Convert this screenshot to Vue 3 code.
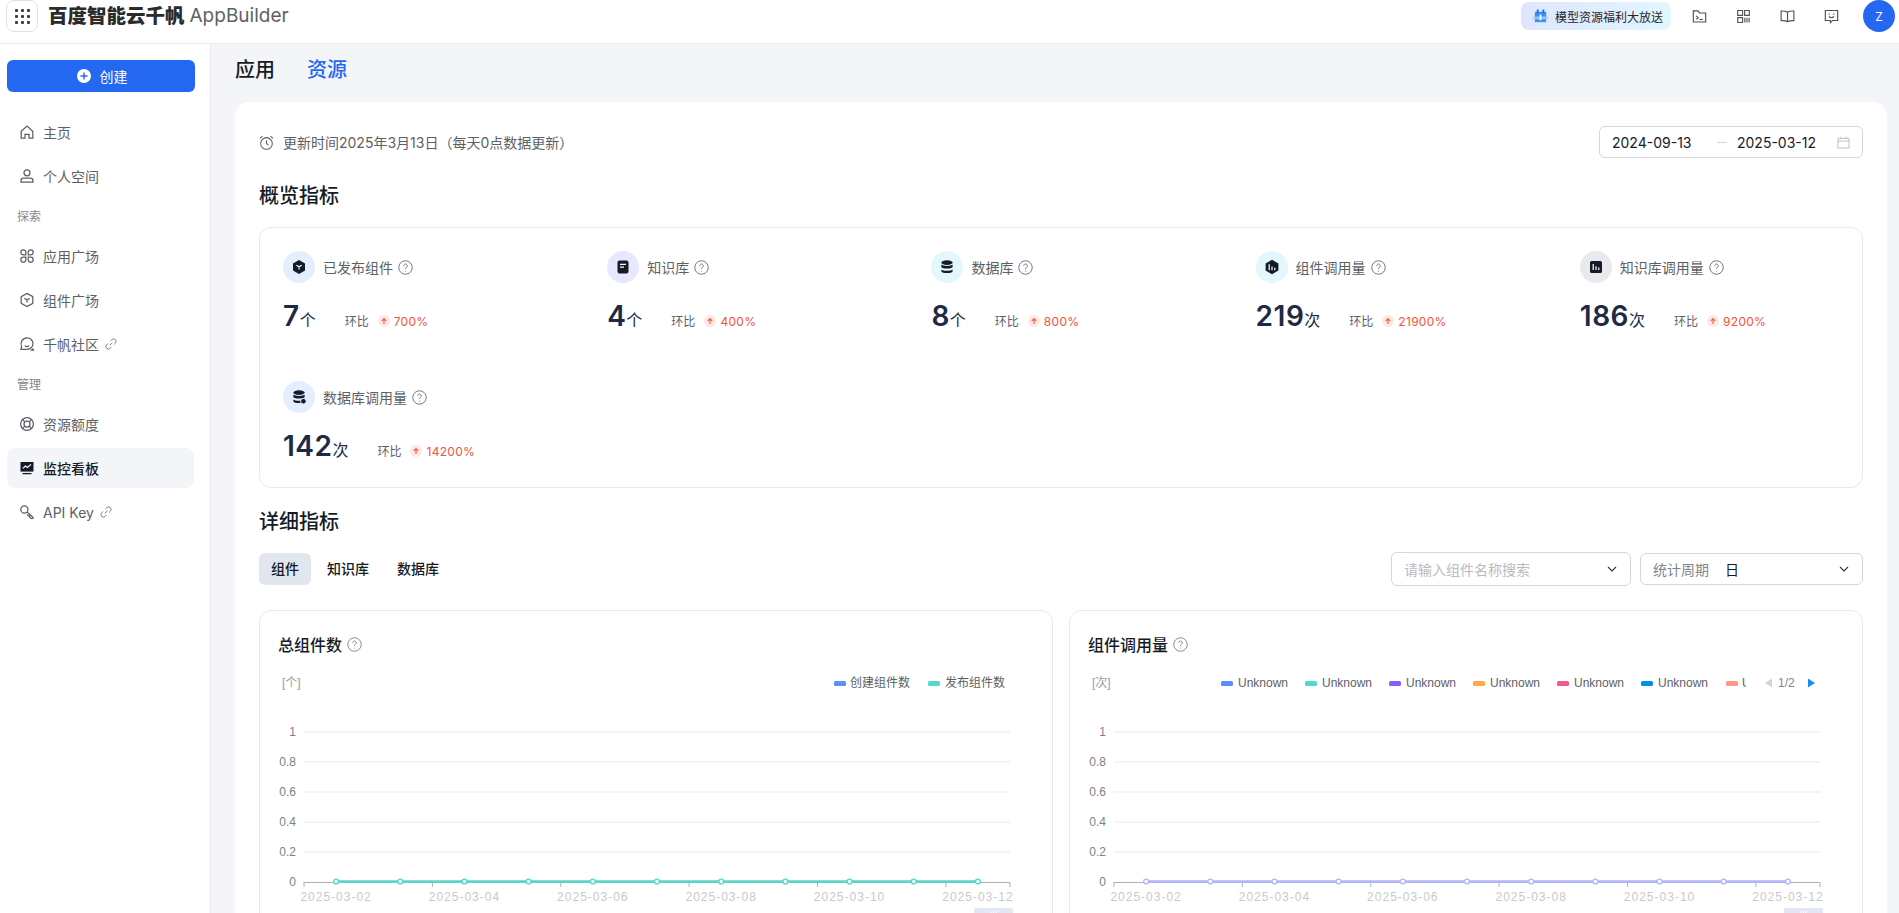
<script setup>
const linkIcon = ["M6.6 9.4 9.4 6.6", "M7.4 4.6 9 3a2.8 2.8 0 0 1 4 4l-1.6 1.6", "M8.6 11.4 7 13a2.8 2.8 0 0 1-4-4l1.6-1.6"];

// 侧边栏
const nav = [
  { label: "主页", icon: ["M2.2 7.2 8 2l5.8 5.2V14H10v-3.6H6V14H2.2z"] },
  { label: "个人空间", icon: ["M8 1.8a3 3 0 1 0 0 6 3 3 0 0 0 0-6z", "M2 14.2v-1.4c0-1.5 1.3-2.6 2.8-2.6h6.4c1.5 0 2.8 1.1 2.8 2.6v1.4z"] },
  { section: "探索" },
  { label: "应用广场", icon: ["M4.3 1.8a2.5 2.5 0 0 0 0 5h2.5V4.3a2.5 2.5 0 0 0-2.5-2.5z", "M11.7 1.8a2.5 2.5 0 0 1 0 5H9.2V4.3a2.5 2.5 0 0 1 2.5-2.5z", "M4.3 14.2a2.5 2.5 0 0 1 0-5h2.5v2.5a2.5 2.5 0 0 1-2.5 2.5z", "M11.7 14.2a2.5 2.5 0 0 0 0-5H9.2v2.5a2.5 2.5 0 0 0 2.5 2.5z"] },
  { label: "组件广场", icon: ["M8 1.4l5.8 3.2v6.8L8 14.6l-5.8-3.2V4.6z", "M5.4 6.4 8 8l2.6-1.6M8 8v2.6"] },
  { label: "千帆社区", link: true, icon: ["M8 1.8a6 6 0 0 0-5.4 8.6L2 13.4h6a5.8 5.8 0 0 0 6-5.8 5.9 5.9 0 0 0-6-5.8z", "M5.4 7.2h.01M10.4 7.2h.01", "M5.8 9.8c1.2.9 3.2.9 4.4 0", "M13.4 12.4l1 1.8h-3"] },
  { section: "管理" },
  { label: "资源额度", icon: ["M8 1.6a6.4 6.4 0 1 0 0 12.8A6.4 6.4 0 0 0 8 1.6z", "M8 5a3 3 0 1 0 0 6 3 3 0 0 0 0-6z", "M3.5 3.5 5.9 5.9M12.5 3.5 10.1 5.9M3.5 12.5l2.4-2.4M12.5 12.5l-2.4-2.4"] },
  { label: "监控看板", active: true },
  { label: "API Key", link: true, icon: ["M5.4 1.8a3.6 3.6 0 1 0 0 7.2 3.6 3.6 0 0 0 0-7.2z", "M8 8l6 5.2v1.2h-2.2L10.6 13v-1.2H9.4L8.2 10.4", "M4.6 4.4h.01"] },
];

const headerIcons = [
  ["M1.4 2h5l1.6 2.2h6.6v9.6H1.4z", "M4.4 7.4 6.6 9.2 4.4 11", "M8 11.2h3.4"],
  ["M1.8 1.6h5.2v5.2H1.8zM9.2 1.6h5v5.2h-5zM1.8 9.2h5.2v5.2H1.8z", "M9.4 9.2v5.2M11.7 9.2v5.2M14 9.2v5.2"],
  ["M8 3.4C6.6 2.4 4.4 2 1.2 2.2v10.2c3.2-.2 5.4.2 6.8 1.2 1.4-1 3.6-1.4 6.8-1.2V2.2C11.6 2 9.4 2.4 8 3.4z", "M8 3.4v10.2"],
  ["M1.4 1.6h13.2v10.6H9.2L6.8 14.6v-2.4H1.4z", "M5.6 4.8v1.2M10.4 4.8v1.2", "M5.2 8c1.5 1.2 4.1 1.2 5.6 0"],
];

// 概览指标
const stats = [
  { label: "已发布组件", value: "7", unit: "个", rate: "700%", tint: "#e3effe", kind: "box" },
  { label: "知识库", value: "4", unit: "个", rate: "400%", tint: "#e7e8fd", kind: "doc" },
  { label: "数据库", value: "8", unit: "个", rate: "800%", tint: "#e2f7fe", kind: "db" },
  { label: "组件调用量", value: "219", unit: "次", rate: "21900%", tint: "#e2f7fe", kind: "hexbar" },
  { label: "知识库调用量", value: "186", unit: "次", rate: "9200%", tint: "#e8eaee", kind: "bar" },
  { label: "数据库调用量", value: "142", unit: "次", rate: "14200%", tint: "#e3effe", kind: "dbcall" },
];

const tabs = ["组件", "知识库", "数据库"];

// 图表坐标
const axisLeft = 26;
const axisRight = 732;
const band = (axisRight - axisLeft) / 11;
const gridY = [
  { text: "1", y: 66 },
  { text: "0.8", y: 96 },
  { text: "0.6", y: 126 },
  { text: "0.4", y: 156 },
  { text: "0.2", y: 186 },
  { text: "0", y: 216 },
];
const points = Array.from({ length: 11 }, (_, i) => axisLeft + band * (i + 0.5));
const ticks = [0, 2, 4, 6, 8, 10, 11].map((i) => axisLeft + band * i);
const xLabels = [2, 4, 6, 8, 10, 12].map((d, i) => ({
  text: "2025-03-" + String(d).padStart(2, "0"),
  x: points[i * 2],
}));

const unknownColors = ["#5b8ff9", "#53d9cb", "#8e5cf8", "#ffa940", "#f25a8c", "#0090f0"];

const charts = [
  { title: "总组件数", unit: "[个]", line: "#53d9cb", kind: "left" },
  { title: "组件调用量", unit: "[次]", line: "#b3b5ff", kind: "right" },
];
</script>

<template>
  <div class="app">
    <header class="topbar">
      <div class="grid-btn">
        <span v-for="n in 9" :key="n" class="dot"></span>
      </div>
      <span class="brand">百度智能云千帆</span>
      <span class="product">AppBuilder</span>
      <div class="top-right">
        <div class="promo">
          <svg class="promo-icon" viewBox="0 0 18 18">
            <path d="M3 4h12v11H3z" fill="#3f8cf5" />
            <path d="M1 9h16v3H1z" fill="#9fd4fb" opacity="0.8" />
            <path d="M5 1.5h2v4H5zM11 1.5h2v4h-2z" fill="#1f6fe8" />
            <path d="M8 7h2v6H8z" fill="#fff" />
          </svg>
          <span>模型资源福利大放送</span>
        </div>
        <svg v-for="(icon, i) in headerIcons" :key="i" class="head-icon" viewBox="0 0 16 16">
          <path v-for="d in icon" :key="d" :d="d" />
        </svg>
        <div class="avatar">Z</div>
      </div>
    </header>

    <div class="body">
      <aside class="sidebar">
        <button class="create">
          <svg class="plus" viewBox="0 0 14 14">
            <circle cx="7" cy="7" r="7" fill="#fff" />
            <path d="M7 3.5v7M3.5 7h7" stroke="#2468f2" stroke-width="1.4" />
          </svg>
          创建
        </button>
        <nav class="nav">
          <template v-for="item in nav" :key="item.label || item.section">
            <div v-if="item.section" class="nav-section">{{ item.section }}</div>
            <div v-else class="nav-item" :class="{ active: item.active }">
              <svg v-if="item.active" class="nav-icon" viewBox="0 0 16 16">
                <path d="M1.5 2h13v9.6h-13z" fill="#151b26" />
                <path d="M3.8 8.4 6.4 6l2 1.4 3.6-3" fill="none" stroke="#fff" stroke-width="1.2" />
                <path d="M3.5 13.6h9" stroke="#151b26" stroke-width="1.3" />
              </svg>
              <svg v-else class="nav-icon line" viewBox="0 0 16 16">
                <path v-for="d in item.icon" :key="d" :d="d" />
              </svg>
              <span>{{ item.label }}</span>
              <svg v-if="item.link" class="link-icon" viewBox="0 0 16 16">
                <path v-for="d in linkIcon" :key="d" :d="d" />
              </svg>
            </div>
          </template>
        </nav>
      </aside>

      <main class="main">
        <div class="main-tabs">
          <span>应用</span>
          <span class="current">资源</span>
        </div>
        <section class="card">
          <div class="update-row">
            <div class="update">
              <svg class="clock" viewBox="0 0 16 16">
                <circle cx="8" cy="9" r="6.2" />
                <path d="M8 5.6v3.6l2.2 1.4M1 3.6l2.8-2.4M15 3.6l-2.8-2.4" />
              </svg>
              更新时间2025年3月13日（每天0点数据更新）
            </div>
            <div class="date-picker">
              <span class="date">2024-09-13</span>
              <span class="dash"></span>
              <span class="date">2025-03-12</span>
              <svg class="calendar" viewBox="0 0 14 14">
                <path d="M1 2.5h12V13H1zM1 5.5h12M4 .8v2.6M10 .8v2.6" />
              </svg>
            </div>
          </div>

          <h2 class="title overview-title">概览指标</h2>
          <div class="overview">
            <div v-for="s in stats" :key="s.label" class="stat">
              <div class="stat-head">
                <span class="stat-icon" :style="{ background: s.tint }">
                  <svg viewBox="0 0 16 16" class="stat-svg">
                    <template v-if="s.kind === 'box'">
                      <path d="M8 1 14 4.4v7.2L8 15l-6-3.4V4.4z" fill="#151b26" />
                      <path d="M5.4 6.2 8 7.8l2.6-1.6M8 7.8v2.6" stroke="#fff" fill="none" stroke-width="1.1" />
                    </template>
                    <template v-else-if="s.kind === 'doc'">
                      <rect x="2.5" y="1.5" width="11" height="13" rx="2" fill="#151b26" />
                      <path d="M5 5.4h6M5 8.2h4" stroke="#fff" stroke-width="1.2" />
                    </template>
                    <template v-else-if="s.kind === 'db' || s.kind === 'dbcall'">
                      <ellipse cx="8" cy="3.6" rx="5.6" ry="2.4" fill="#151b26" />
                      <path d="M2.4 5.6C3.6 7.4 12.4 7.4 13.6 5.6v2.6C12.4 10 3.6 10 2.4 8.2z" fill="#151b26" />
                      <path d="M2.4 10.4c1.2 1.8 10 1.8 11.2 0v2c-1 2.2-10.2 2.2-11.2 0z" fill="#151b26" />
                      <circle v-if="s.kind === 'dbcall'" cx="12.4" cy="12.2" r="2.8" fill="#151b26" stroke="#e3effe" />
                    </template>
                    <template v-else-if="s.kind === 'hexbar'">
                      <path d="M8 .8 14.4 4.4v7.2L8 15.2l-6.4-3.6V4.4z" fill="#151b26" />
                      <path d="M5.2 5.2v6M8 7.6v3.6M10.8 8.8v2.4" stroke="#fff" stroke-width="1.2" />
                    </template>
                    <template v-else>
                      <rect x="2" y="2" width="12" height="12" rx="1.6" fill="#151b26" />
                      <path d="M5.2 5v6M8 7.2V11M10.8 8.4V11" stroke="#fff" stroke-width="1.2" />
                    </template>
                  </svg>
                </span>
                <span class="stat-label">{{ s.label }}</span>
                <svg class="help" viewBox="0 0 14 14">
                  <circle cx="7" cy="7" r="6.3" />
                  <path d="M5.3 5.4a1.7 1.7 0 1 1 2.6 1.5c-.6.3-.9.7-.9 1.4M7 9.9v.8" />
                </svg>
              </div>
              <div class="stat-value">
                <span class="num">{{ s.value }}</span>
                <span class="unit">{{ s.unit }}</span>
                <span class="ratio">环比</span>
                <span class="up">
                  <svg viewBox="0 0 8 8"><path d="M4 7V2M1.8 4 4 1.6 6.2 4" /></svg>
                </span>
                <span class="rate">{{ s.rate }}</span>
              </div>
            </div>
          </div>

          <h2 class="title detail-title">详细指标</h2>
          <div class="filter-row">
            <div class="seg">
              <span v-for="(t, i) in tabs" :key="t" class="seg-item" :class="{ on: i === 0 }">{{ t }}</span>
            </div>
            <div class="filters">
              <div class="select search">
                <span class="placeholder">请输入组件名称搜索</span>
                <svg class="chev" viewBox="0 0 12 12"><path d="M2 4l4 4 4-4" /></svg>
              </div>
              <div class="select period">
                <span class="select-label">统计周期</span>
                <span class="select-value">日</span>
                <svg class="chev" viewBox="0 0 12 12"><path d="M2 4l4 4 4-4" /></svg>
              </div>
            </div>
          </div>

          <div class="charts">
            <div v-for="c in charts" :key="c.title" class="chart-card">
              <div class="chart-title">
                {{ c.title }}
                <svg class="help light" viewBox="0 0 14 14">
                  <circle cx="7" cy="7" r="6.3" />
                  <path d="M5.3 5.4a1.7 1.7 0 1 1 2.6 1.5c-.6.3-.9.7-.9 1.4M7 9.9v.8" />
                </svg>
              </div>
              <svg class="chart" width="756" height="252" viewBox="0 0 756 252">
                <text x="4" y="21" class="unit-text">{{ c.unit }}</text>

                <g v-if="c.kind === 'left'">
                  <rect x="556" y="15" width="12" height="5" rx="1.5" fill="#5b8ff9" />
                  <text x="572" y="21" class="legend">创建组件数</text>
                  <rect x="650" y="15" width="12" height="5" rx="1.5" fill="#53d9cb" />
                  <text x="667" y="21" class="legend">发布组件数</text>
                </g>
                <g v-else>
                  <g v-for="(color, i) in unknownColors" :key="color">
                    <rect :x="133 + i * 84" y="15" width="12" height="5" rx="1.5" :fill="color" />
                    <text :x="150 + i * 84" y="21" class="legend">Unknown</text>
                  </g>
                  <rect x="638" y="15" width="12" height="5" rx="1.5" fill="#ff9a82" />
                  <text x="654" y="21" class="legend">U</text>
                  <rect x="658" y="8" width="14" height="20" fill="#fff" />
                  <path d="M684 12.5v9l-7-4.5z" fill="#d4d5d8" />
                  <text x="690" y="21" class="pager">1/2</text>
                  <path d="M720 12.5v9l7-4.5z" fill="#1a8cff" />
                </g>

                <g v-for="g in gridY" :key="g.y">
                  <line v-if="g.text !== '0'" :x1="axisLeft" :x2="axisRight" :y1="g.y" :y2="g.y" stroke="#e8e9eb" />
                  <text :x="axisLeft - 8" :y="g.y + 4" class="y-label">{{ g.text }}</text>
                </g>
                <line :x1="axisLeft" :x2="axisRight" y1="216.5" y2="216.5" stroke="#aeb0b4" />
                <line v-for="t in ticks" :key="t" :x1="t" :x2="t" y1="216" y2="221" stroke="#aeb0b4" />
                <text v-for="l in xLabels" :key="l.text" :x="l.x" y="235" class="x-label">{{ l.text }}</text>

                <line :x1="points[0]" :x2="points[10]" y1="215.5" y2="215.5" :stroke="c.line" stroke-width="2.4" />
                <circle v-for="p in points" :key="p" :cx="p" cy="215.5" r="2.4" fill="#fff" :stroke="c.line" stroke-width="1.4" />

                <rect x="696" y="242" width="39" height="12" rx="2" fill="#e2e7f3" />
                <path d="M713 245v5M715.5 245v5M718 245v5" stroke="#fff" />
              </svg>
            </div>
          </div>
        </section>
      </main>
    </div>
  </div>
</template>

<style scoped>
.app {
  height: 913px;
  overflow: hidden;
  display: flex;
  flex-direction: column;
  background: #f3f5f9;
}

/* 顶部栏 */
.topbar {
  height: 44px;
  flex: none;
  box-sizing: border-box;
  display: flex;
  align-items: flex-start;
  background: #fff;
  border-bottom: 1px solid #e8e9eb;
  padding-left: 6px;
}
.grid-btn {
  width: 32px;
  height: 32px;
  box-sizing: border-box;
  border: 1px solid #e0e1e4;
  border-radius: 8px;
  display: grid;
  grid-template-columns: repeat(3, 3px);
  grid-auto-rows: 3px;
  gap: 3px;
  justify-content: center;
  align-content: center;
}
.dot {
  background: #3b3d42;
  border-radius: 1px;
}
.brand {
  margin-left: 10px;
  margin-top: 3px;
  font-size: 19.5px;
  line-height: 26px;
  font-weight: 900;
  color: #2b2b2b;
}
.product {
  margin-left: 5px;
  margin-top: 3px;
  font-size: 19px;
  line-height: 26px;
  color: #5f6166;
}
.top-right {
  margin-left: auto;
  display: flex;
  align-items: center;
  height: 32px;
  padding-right: 4px;
}
.promo {
  width: 150px;
  height: 28px;
  box-sizing: border-box;
  padding-left: 11px;
  display: flex;
  align-items: center;
  gap: 6px;
  border-radius: 8px;
  background: linear-gradient(90deg, #dfe6fc, #e1f6ff);
  font-size: 12px;
  white-space: nowrap;
  color: #1f2430;
  margin-right: 21px;
}
.promo-icon {
  width: 17px;
  height: 17px;
}
.head-icon {
  width: 15px;
  height: 15px;
  margin-right: 29px;
  fill: none;
  stroke: #4e5157;
  stroke-width: 1.2;
}
.head-icon:nth-of-type(4) {
  margin-right: 24px;
}
.avatar {
  width: 32px;
  height: 32px;
  border-radius: 50%;
  background: #2468f2;
  color: #fff;
  font-size: 12px;
  display: flex;
  align-items: center;
  justify-content: center;
}

.body {
  flex: 1;
  display: flex;
  min-height: 0;
}

/* 侧边栏 */
.sidebar {
  width: 211px;
  flex: none;
  box-sizing: border-box;
  background: #fff;
  border-right: 1px solid #e8e9eb;
  padding: 16px 16px 0 7px;
}
.create {
  width: 188px;
  height: 32px;
  border: none;
  border-radius: 6px;
  background: #2468f2;
  color: #fff;
  font-family: inherit;
  font-size: 14px;
  display: flex;
  align-items: center;
  justify-content: center;
  gap: 9px;
  padding: 0 0 0 2px;
}
.plus {
  width: 14px;
  height: 14px;
}
.nav {
  margin-top: 20px;
  display: flex;
  flex-direction: column;
  gap: 4px;
}
.nav-item {
  height: 40px;
  padding-left: 12px;
  display: flex;
  align-items: center;
  font-size: 14px;
  color: #5c5f66;
  border-radius: 8px;
}
.nav-item.active {
  background: #f3f5f9;
  color: #151b26;
  font-weight: 500;
}
.nav-icon {
  width: 16px;
  height: 16px;
  margin-right: 8px;
  flex: none;
}
.nav-icon.line {
  fill: none;
  stroke: #5c5f66;
  stroke-width: 1.25;
}
.link-icon {
  width: 14px;
  height: 14px;
  margin-left: 5px;
  fill: none;
  stroke: #7a7c82;
  stroke-width: 1.1;
}
.nav-section {
  height: 32px;
  padding-left: 10px;
  font-size: 12px;
  line-height: 33px;
  color: #84868c;
}

/* 主区域 */
.main {
  flex: 1;
  min-width: 0;
  padding: 0 12px 0 24px;
}
.main-tabs {
  height: 58px;
  box-sizing: border-box;
  padding-bottom: 10px;
  display: flex;
  align-items: center;
  gap: 32px;
  font-size: 20px;
  font-weight: 500;
  color: #151b26;
}
.main-tabs .current {
  color: #2468f2;
}
.card {
  background: #fff;
  border-radius: 14px;
  padding: 24px 24px 0;
}
.update-row {
  display: flex;
  justify-content: space-between;
  align-items: center;
  height: 32px;
}
.update {
  display: flex;
  align-items: center;
  gap: 9px;
  font-size: 14px;
  color: #5c5f66;
}
.clock {
  width: 15px;
  height: 15px;
  fill: none;
  stroke: #5c5f66;
  stroke-width: 1.1;
}
.date-picker {
  width: 264px;
  height: 32px;
  box-sizing: border-box;
  border: 1px solid #d4d6d9;
  border-radius: 6px;
  padding-left: 12px;
  display: flex;
  align-items: center;
  font-size: 14px;
  color: #151b26;
}
.date {
  width: 79px;
  white-space: nowrap;
}
.dash {
  width: 10px;
  height: 1px;
  background: #d4d6d9;
  margin: 0 10px 0 26px;
}
.calendar {
  width: 13px;
  height: 13px;
  margin-left: 21px;
  fill: none;
  stroke: #b8babf;
}
.title {
  margin: 0;
  font-size: 20px;
  line-height: 28px;
  font-weight: 500;
  color: #151b26;
}
.overview-title {
  margin-top: 24px;
}
.overview {
  margin-top: 17px;
  box-sizing: border-box;
  height: 261px;
  border: 1px solid #e8e9eb;
  border-radius: 12px;
  padding: 23px;
  display: grid;
  grid-template-columns: repeat(5, 1fr);
  column-gap: 65px;
  row-gap: 48px;
  align-content: start;
}
.stat-head {
  display: flex;
  align-items: center;
  height: 32px;
}
.stat-icon {
  width: 32px;
  height: 32px;
  border-radius: 50%;
  display: flex;
  align-items: center;
  justify-content: center;
  margin-right: 8px;
}
.stat-svg {
  width: 16px;
  height: 16px;
}
.stat-label {
  font-size: 14px;
  color: #5c5f66;
}
.help {
  width: 15px;
  height: 15px;
  margin-left: 5px;
  fill: none;
  stroke: #6f7177;
  stroke-width: 0.9;
}
.help.light {
  stroke: #84868c;
}
.stat-value {
  margin-top: 16px;
  height: 34px;
  display: flex;
  align-items: baseline;
  color: #1e2a44;
}
.num {
  font-size: 28px;
  line-height: 34px;
  font-weight: 600;
  letter-spacing: 0.5px;
}
.unit {
  font-size: 16px;
  color: #1e2a44;
}
.ratio {
  margin-left: 29px;
  font-size: 12px;
  color: #5c5f66;
}
.up {
  align-self: center;
  width: 12px;
  height: 12px;
  margin: 10px 4px 0 9px;
  border-radius: 50%;
  background: #ffe8e3;
  display: flex;
  align-items: center;
  justify-content: center;
}
.up svg {
  width: 8px;
  height: 8px;
  fill: none;
  stroke: #f5654a;
  stroke-width: 1.2;
}
.rate {
  font-size: 12px;
  color: #f5513b;
  letter-spacing: 0.3px;
}
.detail-title {
  margin-top: 20px;
}
.filter-row {
  margin-top: 16px;
  height: 34px;
  display: flex;
  align-items: center;
  justify-content: space-between;
}
.seg {
  display: flex;
  gap: 4px;
}
.seg-item {
  height: 32px;
  line-height: 32px;
  padding: 0 12px;
  border-radius: 6px;
  font-size: 14px;
  font-weight: 500;
  color: #151b26;
}
.seg-item.on {
  background: #e2e6ef;
}
.filters {
  display: flex;
  align-items: center;
  gap: 9px;
}
.select {
  box-sizing: border-box;
  display: flex;
  align-items: center;
  border: 1px solid #d4d6d9;
  border-radius: 6px;
  padding: 0 12px;
  font-size: 14px;
}
.search {
  width: 240px;
  height: 34px;
}
.period {
  width: 223px;
  height: 32px;
}
.placeholder {
  color: #b8babf;
}
.select-label {
  color: #84868c;
}
.select-value {
  margin-left: 16px;
  color: #151b26;
}
.chev {
  margin-left: auto;
  width: 12px;
  height: 12px;
  fill: none;
  stroke: #303540;
  stroke-width: 1.1;
}
.charts {
  margin-top: 24px;
  display: grid;
  grid-template-columns: minmax(0, 1fr) minmax(0, 1fr);
  gap: 16px;
}
.chart-card {
  box-sizing: border-box;
  min-width: 0;
  height: 340px;
  border: 1px solid #e8e9eb;
  border-radius: 12px;
  padding: 21px 18px 0;
}
.chart-title {
  display: flex;
  align-items: center;
  height: 24px;
  font-size: 16px;
  font-weight: 500;
  color: #151b26;
}
.chart {
  display: block;
  margin-top: 10px;
  overflow: visible;
  font-family: "Liberation Sans", "Noto Sans CJK SC", sans-serif;
}
.unit-text {
  font-size: 12px;
  fill: #9a9ca1;
}
.legend {
  font-size: 12px;
  fill: #5c5f66;
}
.pager {
  font-size: 12px;
  fill: #84868c;
}
.y-label {
  font-size: 12px;
  fill: #7d7f85;
  text-anchor: end;
}
.x-label {
  font-size: 12px;
  letter-spacing: 1px;
  fill: #c8c9cc;
  text-anchor: middle;
}
</style>

<style>
html,
body {
  margin: 0;
  overflow: hidden;
}
body {
  font-family: Inter, "Noto Sans CJK SC", sans-serif;
}
</style>
